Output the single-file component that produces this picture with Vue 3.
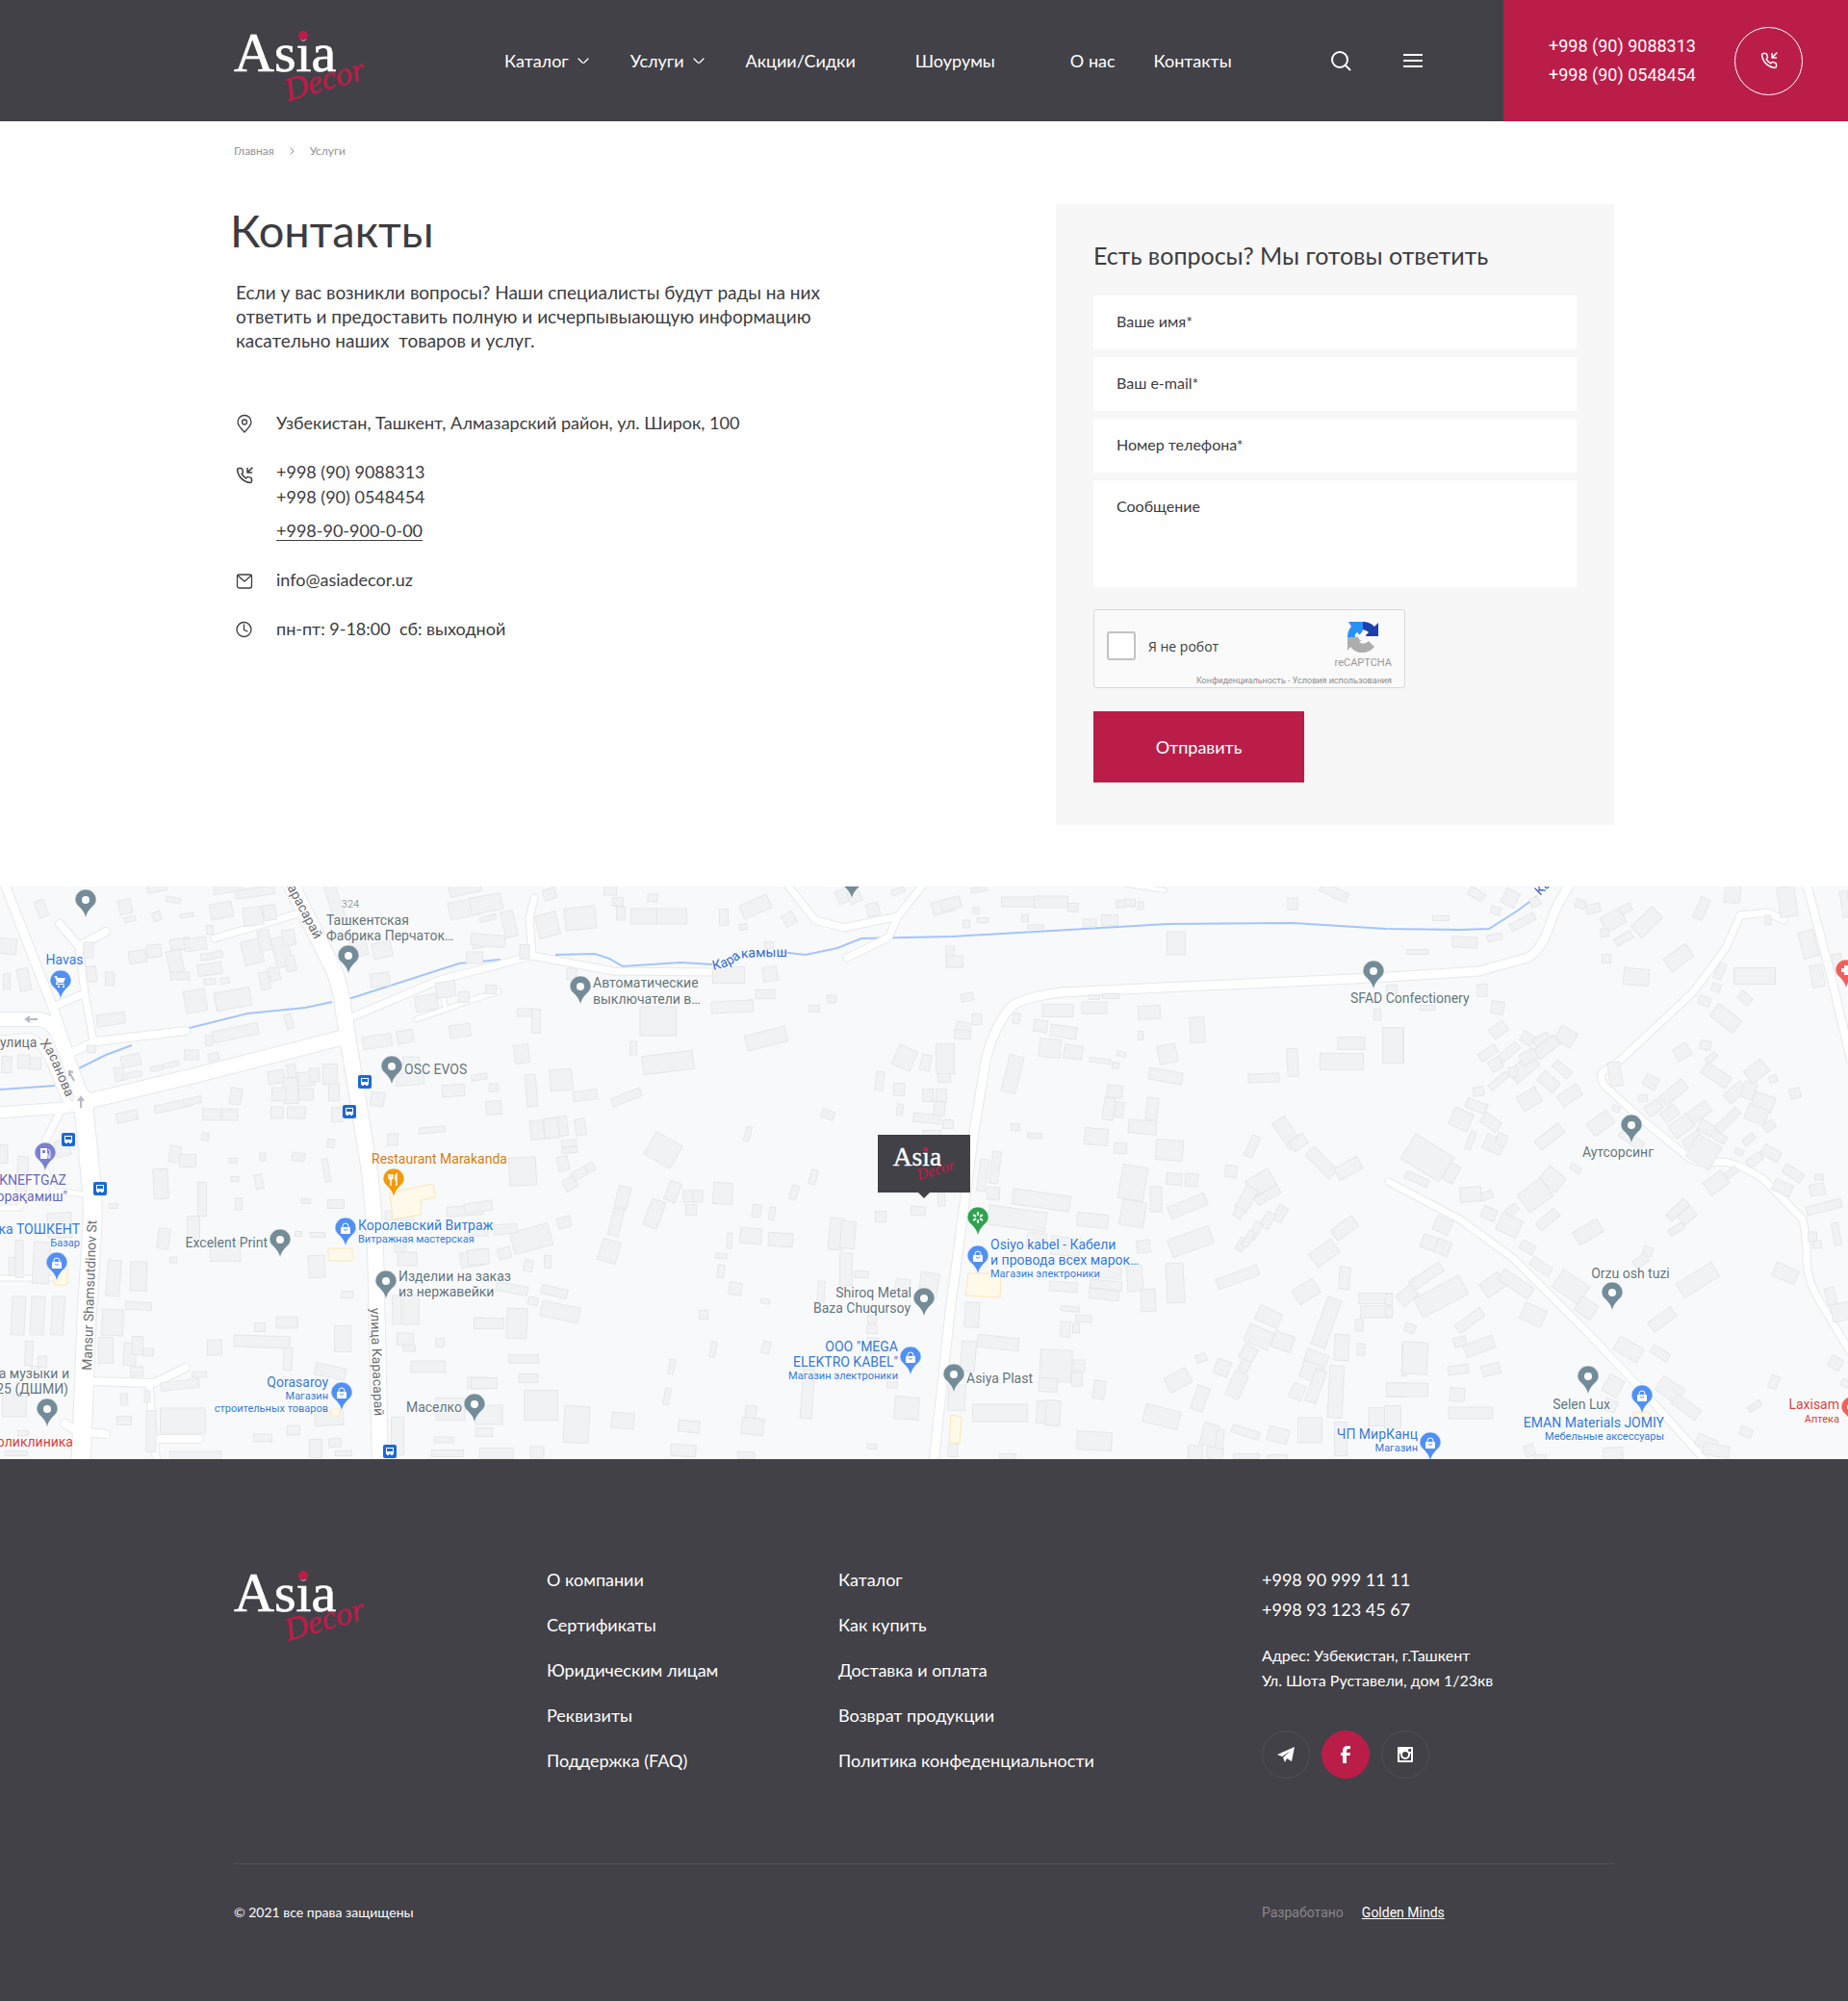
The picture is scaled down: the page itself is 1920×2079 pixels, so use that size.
<script setup>
import { h, reactive } from 'vue'

const Logo = (props) => h('svg', { width: props.width, height: props.height, viewBox: '0 0 136 80', class: 'logo-mark' }, [
  h('text', { x: 0, y: 45, class: 'logo-asia' }, 'Asia'),
  h('circle', { cx: 72, cy: 8, r: 5, class: 'logo-dot' }),
  h('text', { x: 56, y: 76, class: 'logo-decor', transform: 'rotate(-16 56 76)' }, 'Decor'),
])
Logo.props = ['width', 'height']

const form = reactive({ name: '', email: '', phone: '', message: '', human: false })

const companyLinks = ['О компании', 'Сертификаты', 'Юридическим лицам', 'Реквизиты', 'Поддержка (FAQ)']
const shopLinks = ['Каталог', 'Как купить', 'Доставка и оплата', 'Возврат продукции', 'Политика конфеденциальности']

const rivers = [
  'M0 211L57 207', 'M82 189L110 175L137 165', 'M193 148L257 132L317 126L345 120',
  'M362 117L477 80L520 76', 'M577 71L618 70L633 75L647 83L707 79L740 81',
  'M810 68L837 71L870 64L895 54L990 52L1213 39L1343 38L1440 44L1517 45L1547 44L1577 25L1597 10',
]

// [path, width]
const roads = [
  ['M5 -2L55 126L73 177', 9], ['M-5 138H40Q57 140 64 162L87 224', 14], ['M-5 235L67 230L87 226', 11],
  ['M-5 160L30 157Q44 160 56 190L70 224', 8],
  ['M86 220L93 290Q97 320 96 350L90 450L84 600', 19], ['M88 224L200 197L356 157', 15],
  ['M301 -5L346 85Q354 103 357 130L383 290Q390 340 391 420L395 600', 16],
  ['M62 39L82 62L110 47', 8], ['M82 62L88 111L97 161', 7], ['M55 125L88 111', 7], ['M73 173L100 161L193 150', 8],
  ['M223 54L307 29', 7], ['M365 136L457 97L500 86L553 72L637 88L740 89', 7], ['M555 12L550 33L553 72', 7],
  ['M458 99L462 123', 5], ['M433 138L490 118L518 109', 5], ['M62 235L48 263', 7], ['M-4 334H20Q26 325 24 318', 5],
  ['M48 294L55 316L90 320', 5], ['M-4 407H55', 5], ['M93 514L160 516L193 500', 8], ['M155 516L158 555L163 600', 7],
  ['M165 574H207', 8], ['M67 558L80 566L110 569', 8],
  ['M817 -3L847 35L877 43L933 31L960 -3', 7], ['M933 31L923 53L880 74', 7],
  ['M970 600L987 442L1012 255L1024 181Q1032 148 1048 128Q1056 116 1103 110L1230 104L1427 95L1537 88L1587 74Q1602 66 1610 40Q1618 16 1632 -3', 9],
  ['M1443 307L1517 346L1573 387L1647 461L1703 520L1775 600', 7],
  ['M1853 35L1837 27L1808 30L1793 64L1760 109L1683 181L1666 192Q1660 198 1668 208L1707 243L1755 282Q1765 289 1787 286Q1805 286 1833 305L1873 346Q1878 370 1877 391Q1879 412 1890 430L1925 488', 7],
  ['M1877 -3L1900 84L1923 180', 8], ['M1170 -2L1210 4', 4],
]

// Building footprints by map sheet, in sheet units: [centre x, centre y, width, height, angle]
const SHEET = { x: 3, y: 2.57, top: 15 }
const sheets = [
  { left: 0, items: [
    [130,75,30,45,-20],[20,175,60,40,5],[75,265,35,60,-12],[20,270,20,40,0],[285,250,30,40,-5],[275,185,30,40,0],[342,262,26,35,0],[390,68,40,38,-12],[405,102,36,12,-12],[490,95,26,24,-25],[540,52,46,15,10],[583,92,42,10,-8],[490,18,60,22,-10],[655,130,22,24,0],[560,168,60,30,-8],[430,203,54,34,-8],[480,188,44,34,-5],[545,215,44,60,-12],[562,255,60,20,0],[608,168,70,34,-8],[610,320,66,60,-10],[725,315,110,48,-10],[655,235,75,30,-8],[655,270,36,16,-5],[703,267,28,15,-10],[660,200,70,18,-10],[690,80,70,40,-10],[790,95,60,50,-8],[840,85,40,40,-10],[710,20,90,22,-10],[795,30,120,24,-8],[785,190,60,65,-14],[825,160,36,55,-12],[880,190,50,80,-14],[900,150,40,40,-10],[825,268,30,45,-12],[855,250,32,36,-12],[905,220,30,40,-12],
    [900,375,20,38,-15],[345,370,88,32,-8],[735,405,140,30,-12],[652,425,20,28,-5],[598,465,44,26,0],[665,470,34,20,-15],[408,480,60,32,-12],[372,515,30,36,-10],[410,520,60,16,-12],[488,502,40,12,-10],[535,490,46,14,-14],[285,450,28,20,0],[75,482,40,36,0],[20,490,30,44,0],[110,488,32,30,0],[395,630,66,26,-12],[540,600,116,20,-12],[600,588,56,18,-12],[735,575,36,44,8],[660,625,56,32,0],[718,625,48,32,0],[640,683,22,20,8],[725,748,24,14,0],[733,796,24,14,0],[545,730,36,44,8],[585,748,50,34,0],[500,808,44,80,-3],[630,850,28,90,0],[602,930,40,70,0],[510,955,36,54,8],[540,1012,22,16,0],[820,738,18,20,0],[808,804,24,38,-12],[745,862,22,32,0],[930,738,40,20,8],[955,856,26,14,0],[1033,702,22,24,5],[1018,772,18,62,-10],[1048,862,52,24,0],[930,944,22,14,0],[990,946,48,14,0],[703,990,94,54,0],[988,1030,52,58,-3],[1082,1104,36,18,0],
    [860,525,50,34,-8],[910,508,26,36,-8],[905,560,44,70,-3],[955,530,50,36,-5],[955,570,44,30,0],[980,520,30,36,0],[1030,515,44,54,0],[1040,565,34,46,0],[925,618,58,32,0],[865,620,38,32,0],[1050,625,34,38,0],[870,570,44,36,0],
    [355,1060,42,96,4],[355,868,28,14,0],[433,1055,50,78,2],[433,1136,80,20,3],[352,1180,66,70,3],[330,1255,46,70,0],[405,1265,40,60,4],[430,1240,32,50,0],[463,1260,34,20,0],[425,1310,40,26,0],[185,920,76,66,-3],[130,1020,50,110,3],[40,1030,24,50,0],[60,1010,24,100,0],[70,790,32,110,4],[195,715,46,44,-15],[10,730,30,50,0],
    [57,1162,42,104,3],[118,1162,42,102,3],[181,1162,40,102,3],[90,1262,24,64,3],[133,1284,26,30,0],[108,1308,24,24,0],[45,1400,76,62,0],[670,1246,46,42,0],[815,1230,175,30,2],[898,1276,26,60,2],[895,1180,66,30,0],[810,1192,32,24,0],[1068,1224,52,70,0],[560,1347,120,24,-6],[622,1318,46,16,0],[570,1442,140,66,0],[387,1384,22,30,-5],[388,1442,46,22,0],[470,1470,30,110,0],[460,1378,18,30,0],[820,1488,56,20,0],[915,1468,38,26,0],[985,1515,38,50,0],[610,1535,160,20,0],[1045,1500,40,22,-5],[1070,1528,50,12,0],[1030,1310,96,30,12],[1025,1435,90,36,-3],[72,1475,34,12,0],[50,1530,70,14,0],
    [1225,692,34,30,0],[1348,666,80,16,-5],[1175,584,42,36,5],[1278,530,86,34,-5],[1280,480,50,20,0],[1413,560,70,32,-4],[1175,430,90,34,-8],[1262,416,50,34,-10],[1435,400,66,34,-8],[1330,325,70,42,-10],[1390,290,60,40,-8],[1445,310,34,28,0],[1185,265,60,36,-8],[1120,180,50,44,-14],[1190,185,60,40,-12],[1040,50,36,110,-18],[1450,20,100,30,-12],[1450,75,100,46,-12],[1490,165,40,30,-10],[1480,205,50,30,0],[1450,880,110,26,-4],[1470,1010,70,40,-8],[1245,895,90,26,0],[1247,970,36,40,0],[1270,1010,60,36,0],[1235,1145,26,76,0],[1280,1145,52,76,0],[1262,1222,50,32,0],[1275,1248,40,16,0],[1370,1232,26,24,0],[1335,1298,108,32,0],[1487,1342,60,30,0],[1405,1410,90,60,0],[1495,1180,30,26,0],[1240,1482,40,100,0],[1384,1492,60,16,0],[1395,1530,100,18,0],
  ] },
  { left: 490, items: [
    [45,60,100,44,-10],[50,100,50,14,-15],[50,160,104,32,5],[118,115,40,70,-14],[165,190,30,38,0],[242,36,40,28,-20],[238,118,66,62,-14],[338,100,96,58,-6],[432,22,40,30,0],[457,55,34,24,0],[465,88,28,36,0],[563,45,30,20,0],[536,94,82,42,0],[624,94,94,42,0],[787,98,28,44,0],[885,68,92,38,-24],[846,122,24,16,-10],[990,102,36,34,-30],[1158,40,40,36,-24],[1195,42,40,30,-24],[1252,76,40,34,-15],[1330,28,42,16,-20],[1470,70,70,34,-14],[1492,205,24,52,0],[60,290,32,24,0],
    [312,250,30,30,0],[165,352,46,20,0],[200,376,28,64,0],[583,374,114,76,0],[802,252,100,44,0],[930,248,46,38,-8],[927,172,26,18,0],[915,302,60,22,0],[813,335,130,30,-3],[1067,342,32,18,0],[1122,316,26,20,0],[157,462,44,48,-8],[503,448,22,36,0],[612,485,160,50,-7],[918,421,130,42,-14],[280,531,70,56,-5],[186,560,34,86,-5],[354,573,74,26,-8],[25,525,48,16,-8],[68,553,28,20,0],[70,606,48,36,-4],[482,578,96,22,-22],
    [203,664,42,52,-5],[250,659,46,54,-3],[285,655,26,52,-8],[338,657,34,44,-10],[304,702,44,18,-5],[305,718,48,16,-5],[286,754,34,38,-12],[307,808,38,32,-30],[338,780,52,24,-30],[370,766,26,22,-30],[158,776,84,74,-3],[596,718,92,70,30],[860,675,18,38,14],[1110,625,40,22,20],[1064,792,20,38,15],[1006,832,20,38,18],
    [470,845,38,60,14],[449,912,32,72,14],[430,990,58,58,16],[569,890,44,74,20],[627,830,36,54,22],[675,843,30,32,0],[705,843,30,30,0],[683,878,32,28,0],[784,836,60,56,4],[288,911,42,28,-15],[185,955,124,58,-15],[106,930,72,26,-5],[20,1005,66,40,-5],[102,994,38,28,-14],[176,1027,28,30,10],[237,1018,22,34,0],[125,1090,100,24,10],[257,1097,80,22,14],[192,1122,30,20,12],[275,1152,120,42,12],[55,1182,94,28,0],[140,1182,64,80,3],[20,872,86,26,-8],[20,935,60,26,0],
    [887,880,26,34,5],[937,888,18,34,8],[869,947,66,42,4],[963,959,74,36,3],[803,960,14,40,5],[776,1003,36,12,5],[777,1044,22,34,8],[822,1090,38,34,8],[914,1122,26,14,10],[724,1158,28,24,0],[754,1252,18,42,10],[918,1245,24,32,14],[624,1298,18,38,10],[610,1376,18,44,10],[1276,896,34,28,0],[1136,942,44,84,5],[1172,946,44,72,5],[1168,1038,38,88,0],[1216,1050,42,18,0],[1090,1098,22,56,3],[1247,1196,32,22,0],[1247,1172,26,20,0],[1250,1240,36,40,0],[1310,1346,34,16,0],[1356,1408,74,58,4],[1047,1370,36,130,4],[1248,1510,30,14,5],[1393,882,44,24,3],[1465,850,22,36,-3],
    [1350,472,60,56,24],[1416,486,30,42,14],[1475,474,56,80,0],[1272,534,24,50,8],[1332,558,32,34,0],[1423,572,34,34,0],[1463,572,32,34,0],[1458,608,34,38,4],[1474,526,40,24,0],[1336,610,18,32,6],[1418,635,84,22,6],[1485,650,34,22,0],[1435,673,56,14,0],[1345,1078,46,30,8],[1425,1080,56,64,8],
    [162,1276,94,24,0],[178,1328,60,24,0],[40,1342,80,28,0],[216,1400,106,80,0],[326,1452,78,98,3],[470,1442,68,42,5],[678,1458,66,30,6],[660,1522,78,30,3],[870,1418,32,34,6],[877,1458,68,44,6],[855,1535,50,18,0],[78,1530,106,28,0],[204,1526,42,32,0],[55,1425,84,52,0],[40,1472,54,24,0],
  ] },
  { left: 980, items: [
    [25,60,60,30,-15],[110,22,48,12,-8],[235,57,106,26,0],[337,55,104,30,0],[404,72,30,22,0],[102,80,18,18,0],[122,104,36,12,0],[72,114,20,20,0],[255,100,22,20,0],[288,124,52,10,0],[455,112,42,20,0],[519,106,50,28,0],[552,62,28,20,0],[583,58,32,20,0],[616,66,18,20,0],[1090,62,30,30,0],[1218,30,90,26,25],[22,190,28,30,0],[35,216,52,30,0],[726,167,58,62,0],[75,310,40,20,-14],[104,370,30,28,0],[64,390,44,26,8],[60,412,52,22,5],[228,366,22,28,10],[357,346,96,34,0],[472,340,78,30,0],[303,388,42,30,8],[376,403,80,30,8],[333,448,66,50,5],[404,457,56,36,10],[217,516,46,100,14],[488,481,66,14,8],[554,462,28,14,10],[538,493,22,16,5],[470,310,32,12,0],[523,308,50,12,0],
    [643,352,70,36,-3],[615,413,16,24,0],[793,397,46,68,-4],[698,461,58,48,-12],[694,522,104,30,10],[534,563,48,34,6],[516,608,32,58,8],[550,610,24,40,8],[652,608,36,58,6],[620,657,86,36,5],[478,682,72,44,5],[553,714,40,28,4],[706,718,84,54,4],[224,658,26,18,0],[285,680,46,14,6],[592,806,78,90,10],[590,888,76,66,10],[663,850,36,68,0],[721,795,48,32,5],[775,798,38,34,6],[762,868,122,34,-22],[770,964,136,50,-20],[918,1058,134,28,-20],[161,766,26,84,8],[124,786,26,86,8],[155,836,40,34,4],[306,854,180,40,8],[230,902,180,52,8],[465,908,96,36,6],[624,976,42,34,-5],[598,1060,48,70,-4],[722,1075,54,106,-3],[639,1120,46,58,-3],[374,1085,86,26,4],[506,1080,98,24,6],[502,1105,94,26,6],[510,1045,90,30,5],[380,975,90,50,6],[290,960,60,40,6],[397,1142,58,12,4],[438,1170,52,18,4],[382,1196,30,42,4],[414,1194,20,26,0],
    [89,1158,44,68,3],[170,1232,130,34,6],[77,1270,46,80,5],[42,1380,54,70,3],[350,1295,100,84,3],[327,1345,56,36,3],[422,1294,36,30,0],[418,1330,32,36,0],[487,1358,36,50,8],[178,1422,172,46,0],[306,1418,30,60,3],[342,1420,46,66,3],[470,1496,108,48,3],[30,1520,30,34,0],[200,1536,50,14,0],
    [1000,526,96,22,-2],[1088,486,32,74,-3],[1273,434,84,34,0],[1241,484,136,44,0],[1406,440,56,96,0],[1352,356,20,30,0],[1397,288,30,16,0],[1072,672,46,84,-34],[1108,698,50,30,-34],[1178,752,40,90,-44],[1262,768,80,36,-28],[964,708,28,58,24],[896,775,36,30,6],[990,806,80,50,-30],[945,850,40,70,30],[1010,840,80,24,-30],[1050,890,30,44,30],[1012,908,30,44,30],[972,935,24,50,30],[930,970,24,36,30],[950,955,20,44,30],[920,885,26,26,30],[1250,928,80,34,-36],[1188,994,84,44,-36],[1250,1060,32,58,4],[1132,1098,76,44,-32],[1194,1180,44,134,20],[1347,1116,104,28,0],[1346,1150,92,30,0],[1297,1186,24,32,0],[1243,1246,44,70,3],[1303,1252,24,32,3],[1013,1165,76,40,24],[985,1218,80,50,24],[1060,1230,64,44,20],[952,1262,44,40,30],[938,1296,30,30,24],[914,1346,44,70,24],[804,1275,32,20,-20],[870,1300,44,40,20],[732,1333,76,44,-28],[801,1382,40,66,20],[680,1430,110,50,14],[1160,1280,70,44,20],[1145,1310,60,46,20],[1160,1350,36,90,20],[1105,1365,40,40,24],[1224,1364,46,140,3],[1142,1468,74,68,0],[1375,1432,96,50,0],[1238,1490,38,90,0],[1413,1358,60,38,0],[1436,1280,16,86,0],[830,1480,50,60,14],[860,1500,24,70,5],[943,1473,86,20,18],[1045,1480,62,38,14],[785,1525,44,36,0],[845,1530,50,30,10],[945,1536,80,14,0],[1040,1538,60,12,0],
  ] },
  { left: 1440, items: [
    [282,36,52,22,30],[388,46,44,40,28],[343,80,30,20,20],[172,101,52,12,0],[247,163,78,28,3],[340,150,44,18,-12],[100,190,66,12,0],[425,110,84,20,-28],[465,55,30,24,-20],[606,62,30,22,20],[645,74,44,22,-12],[708,104,70,44,-28],[748,74,36,20,-24],[814,110,90,40,-44],[740,155,56,20,-30],[682,138,24,20,-10],[984,75,30,60,24],[1080,36,48,46,6],[1190,105,18,26,0],[1250,55,54,80,-8],[1318,170,48,72,-14],[1345,255,40,60,-10],[1430,60,24,70,-8],[1408,215,30,40,-8],[688,208,26,24,0],[780,256,78,44,5],[912,206,84,42,-36],[1150,255,130,44,0],[1040,240,24,44,24],[1030,284,28,20,20],[992,322,36,24,20],[1120,312,42,22,40],[1060,366,90,40,38],[299,292,30,34,0],[348,340,40,34,8],[350,397,52,30,-36],[318,460,60,24,-34],[130,340,46,12,0],[22,440,64,94,0],[18,290,34,20,0],
    [383,458,70,24,-40],[430,500,90,40,-40],[440,422,40,28,30],[485,425,50,28,-30],[560,415,56,44,30],[500,445,80,30,-38],[342,490,40,30,-30],[350,535,70,18,-40],[395,510,26,26,0],[445,470,50,30,-30],[446,583,66,44,-30],[508,536,64,34,40],[550,503,60,24,40],[572,573,72,34,-34],[287,562,34,22,-10],[282,600,66,26,20],[234,638,62,50,24],[328,645,60,32,36],[510,684,94,32,-38],[263,694,18,52,20],[335,705,60,40,24],[360,690,30,30,20],[130,740,140,76,32],[205,782,36,48,28],[95,796,76,20,24],[263,838,66,38,-4],[315,840,36,20,-20],[520,796,66,46,40],[465,840,90,60,-36],[590,767,32,16,30],[320,890,46,30,24],[383,920,70,50,24],[392,878,40,20,-38],[505,904,76,26,-40],[630,938,86,38,-30],[668,646,76,40,-36],[717,608,24,16,20],[715,515,40,64,-8],[925,456,48,36,-30],[996,440,34,22,10],[825,537,42,32,30],[802,580,28,18,-10],[835,606,50,30,-36],[898,566,90,32,-40],[1028,520,90,34,34],[1015,472,40,16,-40],[1155,508,66,42,-38],[1090,565,70,30,-40],[1130,560,40,44,20],[1175,590,66,40,20],[1205,530,24,18,-20],[1275,567,34,26,-14],[975,618,76,34,-36],[885,622,50,30,-36],[920,655,70,40,-36],[1000,660,50,30,30],[1064,640,90,22,-44],[1155,625,66,40,20],[1195,656,36,24,-36],[955,690,60,26,-36],[990,725,84,70,30],[1040,685,40,20,30],[1132,692,38,18,-38],[1100,725,26,16,20],[1150,745,50,24,-36],[1200,728,60,28,30],[1270,780,66,26,34],[1235,820,60,30,24],[1350,790,26,16,0],[1345,825,46,32,-10],[1365,872,110,22,-14],[1030,806,70,40,-36],[1078,778,40,18,-36],[765,690,80,24,34],
    [908,878,74,24,-42],[940,895,50,30,-40],[905,930,50,18,-30],[176,920,50,38,24],[135,965,48,36,20],[178,978,46,38,24],[125,1055,110,28,-34],[66,1108,60,36,-40],[170,1110,160,56,-28],[75,1195,34,24,20],[332,1080,70,44,-34],[404,1076,110,34,34],[440,980,44,26,30],[484,1030,70,26,34],[575,1085,100,56,34],[625,1140,60,44,34],[458,1158,72,46,24],[262,1174,96,26,-36],[232,1230,40,26,-14],[290,1244,96,34,-20],[226,1304,64,22,-8],[328,1304,56,28,-14],[90,1275,78,86,3],[66,1358,130,36,0],[221,1372,46,36,3],[263,1420,138,32,0],[20,1430,50,60,0],[10,1118,20,28,0],[10,1150,20,28,0],[815,990,30,24,20],[795,1015,46,22,-34],[973,1066,130,44,-32],[862,1172,86,32,-36],[757,1250,84,42,30],[855,1262,60,22,34],[1246,1048,74,38,24],[1330,950,28,26,0],[1343,970,26,20,0],[1403,942,22,60,-10],[1385,1110,30,46,-14],[1420,1150,60,46,-12],[1402,1288,40,30,30],[1208,1338,28,36,20],[1150,1404,44,16,-34],[1122,1472,38,22,24],[1430,1340,24,18,30],[885,1360,80,44,34],[935,1405,90,32,36],[708,1350,50,50,30],[1000,1500,66,30,24],[1030,1520,80,30,10],[448,1520,30,30,-20],[707,1528,60,30,-4],[480,1538,40,14,0],[700,1400,40,30,24],
  ] },
]
const buildings = sheets.flatMap(({ left, items }) =>
  items.map(([x, y, w, h, a]) => ({
    x: Math.round(left + x / SHEET.x), y: Math.round((y - SHEET.top) / SHEET.y),
    w: Math.round(w / SHEET.x), h: Math.round(h / SHEET.y), a,
  })))

const shopPlots = ['M405 318L450 309L452 323L438 326L437 341L408 346Z', 'M341 376H366V389H341Z', 'M56 402L70 397V414H56Z', 'M1006 402H1040L1039 427L1003 425Z', 'M988 549L999 551L997 579L986 577Z', 'M344 543H353V550H344Z', 'M1697 546H1714V552H1697Z']

const GREY = '#738c98', BLUE = '#5090f5'
// [tip x, tip y, colour, glyph]
const pins = [
  [89, 33, GREY], [63, 117, BLUE, 'cart'], [362, 91, GREY], [407, 206, GREY], [47, 296, '#7a80cf', 'gas'],
  [409, 323, '#f39a0b', 'food'], [359, 374, BLUE, 'bag'], [291, 386, GREY], [59, 410, BLUE, 'bag'], [401, 429, GREY],
  [355, 545, BLUE, 'bag'], [49, 562, GREY], [493, 557, GREY], [603, 123, GREY], [885, 13, GREY], [960, 447, GREY],
  [946, 508, BLUE, 'bag'], [1016, 363, '#2ea24f', 'flower'], [1016, 403, BLUE, 'bag'], [991, 526, GREY],
  [1427, 107, GREY], [1695, 267, GREY], [1675, 441, GREY], [1650, 528, GREY], [1706, 548, BLUE, 'bag'],
  [1486, 597, BLUE, 'bag'], [1918, 106, '#f0605a', 'cross'], [1924, 560, '#f0605a', 'cross'],
]
const stops = [[379, 203], [363, 234], [71, 263], [104, 314], [405, 587]]

// [text, x, baseline, anchor, tone, small]
const labels = [
  ['Havas', 67, 81, 'middle', 'blue'], ['324', 364, 22, 'middle', 'faint', 1],
  ['Ташкентская', 339, 40, 'start', 'grey'], ['Фабрика Перчаток…', 339, 56, 'start', 'grey'],
  ['OSC EVOS', 420, 195, 'start', 'grey'], ['Restaurant Marakanda', 386, 288, 'start', 'orange'],
  ['Королевский Витраж', 372, 357, 'start', 'blue'], ['Витражная мастерская', 372, 370, 'start', 'blue', 1],
  ['Excelent Print', 278, 375, 'end', 'grey'], ['Изделии на заказ', 414, 410, 'start', 'grey'],
  ['из нержавейки', 414, 426, 'start', 'grey'], ['KNEFTGAZ', 69, 310, 'end', 'violet'],
  ['орақамиш"', 70, 327, 'end', 'violet'], ['ка ТОШКЕНТ', 83, 361, 'end', 'blue'], ['Базар', 83, 374, 'end', 'blue', 1],
  ['а музыки и', 72, 511, 'end', 'grey'], ['25 (ДШМИ)', 71, 527, 'end', 'grey'], ['оликлиника', 76, 582, 'end', 'red'],
  ['Qorasaroy', 341, 520, 'end', 'blue'], ['Магазин', 341, 533, 'end', 'blue', 1],
  ['строительных товаров', 341, 546, 'end', 'blue', 1], ['Маселко', 480, 546, 'end', 'grey'],
  ['Автоматические', 616, 105, 'start', 'grey'], ['выключатели в…', 616, 122, 'start', 'grey'],
  ['Shiroq Metal', 947, 427, 'end', 'grey'], ['Baza Chuqursoy', 946, 443, 'end', 'grey'],
  ['ООО "MEGA', 933, 483, 'end', 'blue'], ['ELEKTRO KABEL"', 933, 499, 'end', 'blue'],
  ['Магазин электроники', 933, 512, 'end', 'blue', 1], ['Osiyo kabel - Кабели', 1029, 377, 'start', 'blue'],
  ['и провода всех марок…', 1029, 393, 'start', 'blue'], ['Магазин электроники', 1029, 406, 'start', 'blue', 1],
  ['Asiya Plast', 1004, 516, 'start', 'grey'], ['SFAD Confectionery', 1403, 121, 'start', 'grey'],
  ['ЧП МирКанц', 1473, 574, 'end', 'blue'], ['Магазин', 1473, 587, 'end', 'blue', 1],
  ['канцелярских товаров', 1473, 601, 'end', 'blue', 1], ['Аутсорсинг', 1681, 281, 'middle', 'grey'],
  ['Orzu osh tuzi', 1694, 407, 'middle', 'grey'], ['Selen Lux', 1643, 543, 'middle', 'grey'],
  ['EMAN Materials JOMIY', 1729, 562, 'end', 'blue'], ['Мебельные аксессуары', 1729, 575, 'end', 'blue', 1],
  ['Laxisam', 1911, 543, 'end', 'red'], ['Аптека', 1911, 557, 'end', 'red', 1],
]
</script>

<template>
  <div class="page">
    <svg class="defs" aria-hidden="true">
      <symbol id="call" viewBox="0 0 24 24">
        <path d="M16 2v6h6M22.500 1.500L16 8M22 16.900v3a2 2 0 0 1-2.200 2A19.800 19.800 0 0 1 2.100 4.200 2 2 0 0 1 4.100 2h3a2 2 0 0 1 2 1.700c.1 1 .4 1.900.7 2.800a2 2 0 0 1-.4 2.100L8.100 9.900a16 16 0 0 0 6 6l1.300-1.300a2 2 0 0 1 2.100-.4c.9.300 1.900.600 2.800.700a2 2 0 0 1 1.700 2z" />
      </symbol>
    </svg>

    <header class="header">
      <a href="#" class="logo" aria-label="Asia Decor"><Logo width="136" height="80" /></a>
      <nav class="nav">
        <div class="nav-group">
          <a href="#" class="with-arrow">Каталог<svg width="12" height="6" viewBox="0 0 12 6" class="line"><path d="M1 1l4 4q1 .6 2 0l4-4" /></svg></a>
          <a href="#" class="with-arrow">Услуги<svg width="12" height="6" viewBox="0 0 12 6" class="line"><path d="M1 1l4 4q1 .6 2 0l4-4" /></svg></a>
          <a href="#">Акции/Сидки</a>
        </div>
        <a href="#">Шоурумы</a>
        <div class="nav-group nav-last">
          <a href="#">О нас</a>
          <a href="#">Контакты</a>
        </div>
      </nav>
      <div class="tools">
        <button type="button" aria-label="Поиск"><svg width="22" height="22" viewBox="0 0 22 22" class="line thick"><circle cx="10" cy="10" r="8" /><path d="M16 16l4.500 4.500" /></svg></button>
        <button type="button" aria-label="Меню"><svg width="20" height="22" viewBox="0 0 20 22" class="line thick square"><path d="M0 5h20M0 11h20M0 17h20" /></svg></button>
      </div>
      <div class="phones">
        <div class="phone-list">
          <a href="tel:+998909088313">+998 (90) 9088313</a>
          <a href="tel:+998900548454">+998 (90) 0548454</a>
        </div>
        <button type="button" class="call-button" aria-label="Заказать звонок"><svg width="18" height="18" class="line thick"><use href="#call" /></svg></button>
      </div>
    </header>

    <main>
      <div class="container">
        <nav class="crumbs" aria-label="Навигация">
          <a href="#">Главная</a>
          <svg width="5" height="8" viewBox="0 0 5 8" class="line thin"><path d="M1 1l3 3-3 3" /></svg>
          <a href="#">Услуги</a>
        </nav>
        <div class="columns">
          <section class="info">
            <h1>Контакты</h1>
            <p class="lead">Если у вас возникли вопросы? Наши специалисты будут рады на них ответить и предоставить полную и исчерпывыающую информацию касательно наших&nbsp; товаров и услуг.</p>
            <ul class="contacts">
              <li>
                <svg width="18" height="20" viewBox="0 0 18 20" class="line"><path d="M9 19C5 15 2 12 2 8.500a7 7 0 0 1 14 0C16 12 13 15 9 19z" /><circle cx="9" cy="8.500" r="2.500" /></svg>
                <span>Узбекистан, Ташкент, Алмазарский район, ул. Широк, 100</span>
              </li>
              <li>
                <svg width="18" height="26" class="line thick"><use href="#call" /></svg>
                <div>
                  <a href="tel:+998909088313">+998 (90) 9088313</a>
                  <a href="tel:+998900548454">+998 (90) 0548454</a>
                  <a href="tel:+998909000000" class="direct">+998-90-900-0-00</a>
                </div>
              </li>
              <li>
                <svg width="18" height="20" viewBox="0 0 18 20" class="line"><rect x="1.500" y="4" width="15" height="14" rx="2" /><path d="M2 5l7 6 7-6" /></svg>
                <a href="mailto:info@asiadecor.uz">info@asiadecor.uz</a>
              </li>
              <li>
                <svg width="18" height="20" viewBox="0 0 18 20" class="line"><circle cx="8.500" cy="10" r="7.500" /><path d="M8.500 5v5.500l3.500 1.500" /></svg>
                <span>пн-пт: 9-18:00 &nbsp;сб: выходной</span>
              </li>
            </ul>
          </section>

          <form class="panel" @submit.prevent>
            <h2>Есть вопросы? Мы готовы ответить</h2>
            <div class="fields">
              <input v-model="form.name" type="text" aria-label="Ваше имя" placeholder="Ваше имя*">
              <input v-model="form.email" type="email" aria-label="Ваш e-mail" placeholder="Ваш e-mail*">
              <input v-model="form.phone" type="tel" aria-label="Номер телефона" placeholder="Номер телефона*">
              <textarea v-model="form.message" aria-label="Сообщение" placeholder="Сообщение"></textarea>
            </div>
            <div class="captcha">
              <label class="human"><input v-model="form.human" type="checkbox">Я не робот</label>
              <div class="brand">
                <svg width="34" height="34" viewBox="0 0 34 34">
                  <path fill="#1d3fad" d="M17 1q7 0 12 5l4-4v14H19l4-4q-2-2-6-3z" />
                  <path fill="#2a90f5" d="M17 1v9l-3 5-3-3q-3 2-2 5H1Q1 10 5 6L2 1z" />
                  <path fill="#adadad" d="M1 17h8l4-1 4 3-4 3q5 4 10-1l6 6q-5 6-13 6-7 0-12-6l-3 4z" />
                  <path fill="#fafafa" d="M14 14l4-4 1 5 4 2-5 3h-4l-3-4z" />
                </svg>
                <span>reCAPTCHA</span>
              </div>
              <small>Конфиденциальность - Условия использования</small>
            </div>
            <button type="submit" class="submit">Отправить</button>
          </form>
        </div>
      </div>

      <section class="map" aria-label="Карта">
        <svg class="map-canvas" viewBox="0 0 1920 595" preserveAspectRatio="xMidYMid slice">
          <defs>
            <path id="hasanova" d="M41 163Q49 172 54 184L73 230" />
            <path id="karakamysh" d="M741 87Q758 84 768 75Q774 73 830 73" />
          </defs>
          <path v-for="(d, i) in rivers" :key="'w' + i" :d="d" class="river" />
          <path v-for="(r, i) in roads" :key="'c' + i" :d="r[0]" class="casing" :stroke-width="r[1] + 2" />
          <path v-for="(r, i) in roads" :key="'r' + i" :d="r[0]" class="road" :stroke-width="r[1]" />
          <rect v-for="(b, i) in buildings" :key="'b' + i" class="building" :x="-b.w / 2" :y="-b.h / 2" :width="b.w" :height="b.h" :transform="`translate(${b.x} ${b.y}) rotate(${b.a})`" />
          <path v-for="(d, i) in shopPlots" :key="'p' + i" :d="d" class="plot" />
          <path class="arrow" d="M39 138H28M31 135l-4 3 4 3M84 230V220M81 223l3-4 3 4M77 202l-5-9M76 193l-4-1 0 5" />
          <g v-for="(s, i) in stops" :key="'s' + i" :transform="`translate(${s[0]} ${s[1]})`">
            <rect x="-7" y="-7" width="14" height="14" rx="2" fill="#1a69d8" />
            <path d="M-4-4h8v7h-1v1h-2v-1h-2v1h-2v-1h-1z" fill="#fff" /><path d="M-3-3h6v3h-6z" fill="#1a69d8" />
          </g>
          <g v-for="(p, i) in pins" :key="'m' + i" :transform="`translate(${p[0]} ${p[1]})`">
            <path :fill="p[2]" stroke="#fff" stroke-opacity=".5" d="M0 0Q-1-6-6-11-11-15-11-19a11 11 0 0 1 22 0Q11-15 6-11 1-6 0 0z" />
            <circle v-if="!p[3]" cy="-19" r="4" fill="#fff" />
            <g v-else-if="p[3] === 'bag'"><rect x="-5" y="-20" width="10" height="7" rx="1" fill="#fff" /><path d="M-3-20v-1a3 3 0 0 1 6 0v1" fill="none" stroke="#fff" /><path d="M-2-18q2 3 4 0" fill="none" :stroke="p[2]" /></g>
            <path v-else-if="p[3] === 'cart'" d="M-6-24h2l1 2h8l-2 5h-6l-1 1h8v1h-9v-2l1-1-2-5h-1zM-3-14h2v2h-2zM2-14h2v2h-2z" fill="#fff" />
            <g v-else-if="p[3] === 'gas'"><path d="M-5-24h7v11h-7z" fill="#fff" /><path d="M-3-22h3v3h-3z" :fill="p[2]" /><path d="M2-18h1v4h2v-7l-2-2" fill="none" stroke="#fff" /></g>
            <path v-else-if="p[3] === 'food'" d="M-5-24v4l2 2v6M-3-24v5M-1-24v4l-2 2M3-12v-12q-2 2-1 6h1" fill="none" stroke="#fff" stroke-width="1.500" />
            <path v-else-if="p[3] === 'cross'" d="M-2-24h4v3h3v4h-3v3h-4v-3h-3v-4h3z" fill="#fff" />
            <g v-else fill="#fff"><ellipse v-for="a in 6" :key="a" cx="0" cy="-4" rx="1.200" ry="2" :transform="`translate(0 -19) rotate(${a * 60})`" /></g>
          </g>
          <text v-for="(l, i) in labels" :key="'l' + i" :x="l[1]" :y="l[2]" :text-anchor="l[3]" :class="['label', l[4], { small: l[5] }]">{{ l[0] }}</text>
          <text class="label street" transform="translate(95 503) rotate(-88)">Mansur Shamsutdinov St</text>
          <text class="label street" transform="translate(385 438) rotate(88)">улица Карасарай</text>
          <text class="label street" transform="translate(294 -7) rotate(62)">Карасарай</text>
          <text class="label street" x="0" y="167">улица</text>
          <text class="label street"><textPath href="#hasanova">Хасанова</textPath></text>
          <text class="label water"><textPath href="#karakamysh">Каракамыш</textPath></text>
          <text class="label water" transform="translate(1600 10) rotate(-45)">Ка</text>
        </svg>
        <div class="marker"><Logo width="66" height="38" /></div>
      </section>
    </main>

    <footer class="footer">
      <div class="container">
        <div class="footer-grid">
          <a href="#" class="footer-logo" aria-label="Asia Decor"><Logo width="136" height="80" /></a>
          <ul><li v-for="l in companyLinks" :key="l"><a href="#">{{ l }}</a></li></ul>
          <ul><li v-for="l in shopLinks" :key="l"><a href="#">{{ l }}</a></li></ul>
          <div>
            <div class="footer-phones">
              <a href="tel:+998909991111">+998 90 999 11 11</a>
              <a href="tel:+998931234567">+998 93 123 45 67</a>
            </div>
            <address>Адрес: Узбекистан, г.Ташкент<br>Ул. Шота Руставели, дом 1/23кв</address>
            <div class="socials">
              <a href="#" aria-label="Telegram"><svg width="18" height="18" viewBox="0 0 18 18"><path fill="#fff" d="M0 9L18 1l-3 15-5-3-2 4-2-5 8-7-9 6z" /></svg></a>
              <a href="#" class="active" aria-label="Facebook"><svg width="12" height="18" viewBox="0 0 12 18"><path fill="#fff" d="M3 18v-8H1V7h2V5q0-5 5-5h3v3H9Q7 3 7 5v2h4l-.5 3H7v8z" /></svg></a>
              <a href="#" aria-label="Instagram"><svg width="16" height="16" viewBox="0 0 16 16"><rect width="16" height="16" rx="1" fill="#fff" /><path d="M2 7h12v7H2zM12 2h2v3h-3V3z" fill="#424147" /><circle cx="8" cy="8" r="5" fill="#fff" /><circle cx="8" cy="8" r="3" fill="#424147" /></svg></a>
            </div>
          </div>
        </div>
        <div class="footer-bottom">
          <span>© 2021 все права защищены</span>
          <span class="made">Разработано <a href="#">Golden Minds</a></span>
        </div>
      </div>
    </footer>
  </div>
</template>

<style>
body { margin: 0; }
.logo-mark { display: block; overflow: visible; }
.logo-asia { font: 58px "Liberation Serif", serif; fill: #fff; stroke: #fff; stroke-width: .7px; }
.logo-dot { fill: #bb1d49; }
.logo-decor { font: italic 34px "Liberation Serif", serif; fill: #bb1d49; stroke: #bb1d49; stroke-width: .5px; }
</style>

<style scoped>
.page { font-family: Lato, sans-serif; font-size: 18px; color: #3c3c3f; background: #fff; }
.page *, .page *::before { box-sizing: border-box; }
.defs { position: absolute; width: 0; height: 0; }
a { color: inherit; text-decoration: none; }
ul { list-style: none; margin: 0; padding: 0; }
button { border: 0; padding: 0; background: none; color: inherit; font: inherit; cursor: pointer; }
svg { display: block; }
.line { fill: none; stroke: currentColor; stroke-width: 1.3; stroke-linecap: round; stroke-linejoin: round; }
.thick { stroke-width: 2; }
.thin { stroke-width: 1; }
.square { stroke-linecap: butt; }
.container { max-width: 1434px; margin: 0 auto; }

.header { display: flex; align-items: stretch; height: 126px; background: #424147; color: #fff; padding-left: max(24px, calc((100% - 1434px) / 2)); }
.logo { align-self: flex-start; margin: 29px 145px 0 0; }
.nav { display: flex; align-items: center; gap: 62px; }
.nav-group { display: flex; align-items: center; gap: 43px; }
.nav-last { gap: 40px; margin-left: 16px; }
.with-arrow { display: flex; align-items: center; gap: 9px; }
.tools { display: flex; align-items: center; gap: 54px; margin-left: auto; margin-right: 84px; }
.phones { width: 358px; background: #bb1d49; display: flex; align-items: center; justify-content: space-between; padding: 0 47px; font-family: Roboto, sans-serif; }
.phone-list { display: flex; flex-direction: column; gap: 6px; line-height: 24px; }
.call-button { width: 71px; height: 71px; border: 1px solid #fff; border-radius: 50%; display: grid; place-items: center; }

.crumbs { display: flex; align-items: center; gap: 16px; padding-top: 22px; margin-bottom: 46px; font-size: 12px; line-height: 18px; color: #929296; }
.columns { display: flex; justify-content: space-between; align-items: flex-start; padding-bottom: 64px; }
.info { width: 640px; }
h1 { margin: 0 0 24px -4px; font-size: 47px; line-height: 55px; font-weight: 400; }
.lead { margin: 0 0 60px 2px; font-size: 19px; line-height: 25px; }
.contacts { display: flex; flex-direction: column; gap: 25px; line-height: 26px; margin-left: 2px; }
.contacts li { display: flex; gap: 24px; align-items: flex-start; }
.contacts li > svg { margin-top: 4px; }
.contacts li > div { display: flex; flex-direction: column; align-items: flex-start; }
.contacts .direct { margin-top: 9px; text-decoration: underline; text-decoration-thickness: 1px; text-underline-offset: 3px; }

.panel { width: 580px; background: #f7f7f7; padding: 38px 39px 44px; }
h2 { margin: 0 0 27px; font-size: 25px; line-height: 30px; font-weight: 400; }
.fields { display: flex; flex-direction: column; gap: 8px; }
.fields input, .fields textarea { display: block; width: 100%; height: 56px; border: 0; border-radius: 0; background: #fff; padding: 16px 24px 20px; font: 16px/20px Lato, sans-serif; color: inherit; resize: none; }
.fields textarea { height: 111px; padding-top: 17px; }
.fields ::placeholder { color: #3c3c3f; opacity: 1; }
.captcha { position: relative; display: flex; flex-wrap: wrap; justify-content: space-between; width: 324px; height: 82px; margin: 23px 0 24px; padding: 11px 13px 0; border: 1px solid #d8d8d8; border-radius: 3px; background: #fafafa; font-family: Roboto, sans-serif; }
.human { display: flex; align-items: center; gap: 13px; height: 52px; font-family: "Open Sans", sans-serif; font-size: 14px; }
.human input { appearance: none; width: 30px; height: 30px; margin: 0; border: 2px solid #c3c3c3; border-radius: 3px; background: #fff; }
.brand { display: flex; flex-direction: column; align-items: center; font-size: 11px; line-height: 20px; color: #999; }
.captcha small { width: 100%; font-size: 9px; line-height: 10px; text-align: right; color: #8d8d8d; }
.submit { width: 219px; height: 74px; background: #bb1d49; color: #fff; }

.map { position: relative; height: 595px; background: #f8f9fb; overflow: hidden; }
.map-canvas { width: 100%; height: 100%; }
.river { fill: none; stroke: #a4c5fa; stroke-width: 2; }
.casing, .road { fill: none; stroke-linecap: round; stroke-linejoin: round; }
.casing { stroke: #e6e8ea; }
.road { stroke: #fff; }
.building { fill: #f1f2f4; stroke: #e6e7e9; }
.plot { fill: #fff9e9; stroke: #fbe8b9; }
.arrow { fill: none; stroke: #b5b8c4; stroke-width: 2; }
.label { font: 14px Roboto, sans-serif; paint-order: stroke; stroke: #fff; stroke-width: 2px; stroke-opacity: .7; }
.label.small { font-size: 11px; }
.grey { fill: #62757e; }
.faint { fill: #9a9ea6; }
.blue { fill: #3378dd; }
.orange { fill: #d97a12; }
.violet { fill: #6468bd; }
.red { fill: #d93f3b; }
.street { fill: #6b6e73; }
.water { fill: #2f68cf; }
.marker { position: absolute; left: 50%; top: 258px; width: 96px; height: 60px; margin-left: -48px; padding: 11px 15px; background: #424147; }
.marker::before { content: ""; position: absolute; left: 42px; top: 60px; border: 6px solid transparent; border-top-color: #424147; border-bottom: 0; }

.footer { background: #424147; color: #fff; padding: 113px 0 82px; }
.footer-grid { display: grid; grid-template-columns: 325px 303px 440px 1fr; line-height: 24px; padding-bottom: 88px; border-bottom: 1px solid #545359; }
.footer-grid ul { display: flex; flex-direction: column; gap: 23px; }
.footer-phones { display: flex; flex-direction: column; gap: 7px; }
address { margin: 23px 0 39px; font-style: normal; font-size: 16px; line-height: 26px; }
.socials { display: flex; gap: 12px; }
.socials a { width: 50px; height: 50px; border: 1px solid #515056; border-radius: 50%; display: grid; place-items: center; }
.socials .active { background: #bb1d49; border-color: #bb1d49; }
.footer-bottom { display: grid; grid-template-columns: 1068px 1fr; padding-top: 40px; font-size: 14px; line-height: 20px; }
.made { color: #87868b; font-family: Roboto, sans-serif; display: flex; gap: 19px; }
.made a { color: #fff; text-decoration: underline; }
</style>
